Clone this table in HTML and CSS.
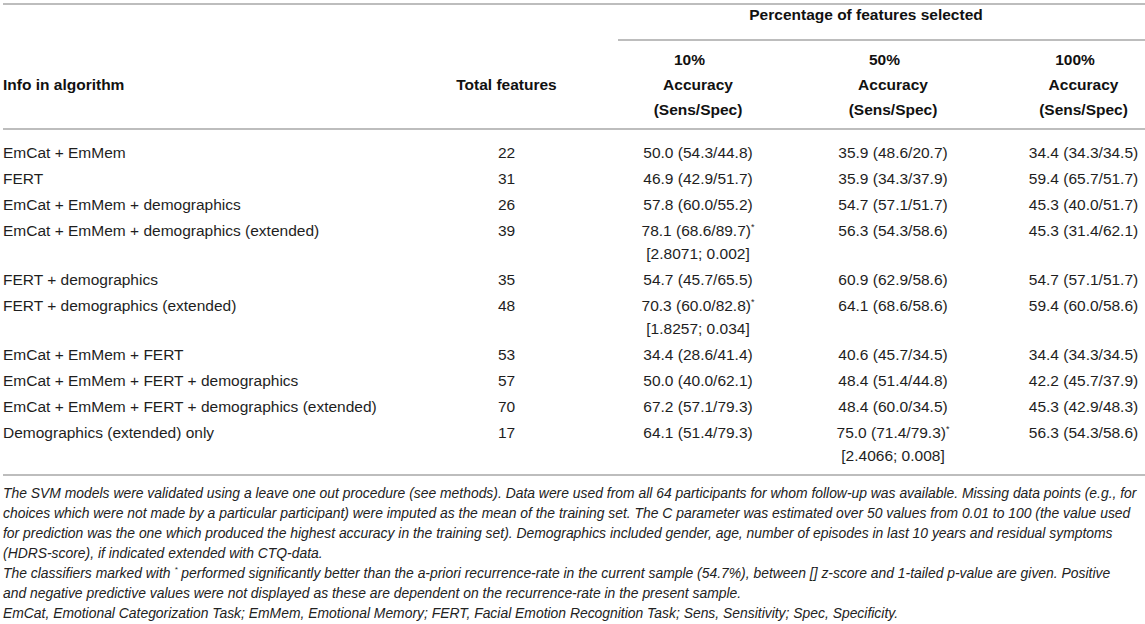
FILE: index.html
```html
<!DOCTYPE html>
<html lang="en">
<head>
  <meta charset="UTF-8">
  <title>SVM classification results</title>
  <link rel="stylesheet" href="styles.css">
</head>
<body>
  <div class="sheet">
    <table class="results">
      <colgroup>
        <col class="c-info">
        <col class="c-total">
        <col class="c-10">
        <col class="c-50">
        <col class="c-100">
      </colgroup>
      <thead>
        <tr class="group-row">
          <th></th>
          <th></th>
          <th colspan="3" class="group">Percentage of features selected</th>
        </tr>
        <tr class="label-row">
          <th class="info">Info in algorithm</th>
          <th class="total">Total features</th>
          <th class="p10"><span class="pct">10%</span><br>Accuracy<br>(Sens/Spec)</th>
          <th class="p50"><span class="pct">50%</span><br>Accuracy<br>(Sens/Spec)</th>
          <th class="p100"><span class="pct">100%</span><br>Accuracy<br>(Sens/Spec)</th>
        </tr>
      </thead>
      <tbody>
        <tr class="first">
          <td class="info">EmCat + EmMem</td>
          <td class="total">22</td>
          <td class="p10">50.0 (54.3/44.8)</td>
          <td class="p50">35.9 (48.6/20.7)</td>
          <td class="p100">34.4 (34.3/34.5)</td>
        </tr>
        <tr>
          <td class="info">FERT</td>
          <td class="total">31</td>
          <td class="p10">46.9 (42.9/51.7)</td>
          <td class="p50">35.9 (34.3/37.9)</td>
          <td class="p100">59.4 (65.7/51.7)</td>
        </tr>
        <tr>
          <td class="info">EmCat + EmMem + demographics</td>
          <td class="total">26</td>
          <td class="p10">57.8 (60.0/55.2)</td>
          <td class="p50">54.7 (57.1/51.7)</td>
          <td class="p100">45.3 (40.0/51.7)</td>
        </tr>
        <tr>
          <td class="info">EmCat + EmMem + demographics (extended)</td>
          <td class="total">39</td>
          <td class="p10">78.1 (68.6/89.7)<sup>*</sup><div class="stat">[2.8071; 0.002]</div></td>
          <td class="p50">56.3 (54.3/58.6)</td>
          <td class="p100">45.3 (31.4/62.1)</td>
        </tr>
        <tr>
          <td class="info">FERT + demographics</td>
          <td class="total">35</td>
          <td class="p10">54.7 (45.7/65.5)</td>
          <td class="p50">60.9 (62.9/58.6)</td>
          <td class="p100">54.7 (57.1/51.7)</td>
        </tr>
        <tr>
          <td class="info">FERT + demographics (extended)</td>
          <td class="total">48</td>
          <td class="p10">70.3 (60.0/82.8)<sup>*</sup><div class="stat">[1.8257; 0.034]</div></td>
          <td class="p50">64.1 (68.6/58.6)</td>
          <td class="p100">59.4 (60.0/58.6)</td>
        </tr>
        <tr>
          <td class="info">EmCat + EmMem + FERT</td>
          <td class="total">53</td>
          <td class="p10">34.4 (28.6/41.4)</td>
          <td class="p50">40.6 (45.7/34.5)</td>
          <td class="p100">34.4 (34.3/34.5)</td>
        </tr>
        <tr>
          <td class="info">EmCat + EmMem + FERT + demographics</td>
          <td class="total">57</td>
          <td class="p10">50.0 (40.0/62.1)</td>
          <td class="p50">48.4 (51.4/44.8)</td>
          <td class="p100">42.2 (45.7/37.9)</td>
        </tr>
        <tr>
          <td class="info">EmCat + EmMem + FERT + demographics (extended)</td>
          <td class="total">70</td>
          <td class="p10">67.2 (57.1/79.3)</td>
          <td class="p50">48.4 (60.0/34.5)</td>
          <td class="p100">45.3 (42.9/48.3)</td>
        </tr>
        <tr class="last">
          <td class="info">Demographics (extended) only</td>
          <td class="total">17</td>
          <td class="p10">64.1 (51.4/79.3)</td>
          <td class="p50">75.0 (71.4/79.3)<sup>*</sup><div class="stat">[2.4066; 0.008]</div></td>
          <td class="p100">56.3 (54.3/58.6)</td>
        </tr>
      </tbody>
    </table>

    <div class="notes">
      <p>The SVM models were validated using a leave one out procedure (see methods). Data were used from all 64 participants for whom follow-up was available. Missing data points (e.g., for<br>choices which were not made by a particular participant) were imputed as the mean of the training set. The C parameter was estimated over 50 values from 0.01 to 100 (the value used<br>for prediction was the one which produced the highest accuracy in the training set). Demographics included gender, age, number of episodes in last 10 years and residual symptoms<br>(HDRS-score), if indicated extended with CTQ-data.</p>
      <p>The classifiers marked with <sup>*</sup> performed significantly better than the a-priori recurrence-rate in the current sample (54.7%), between [] z-score and 1-tailed p-value are given. Positive<br>and negative predictive values were not displayed as these are dependent on the recurrence-rate in the present sample.</p>
      <p>EmCat, Emotional Categorization Task; EmMem, Emotional Memory; FERT, Facial Emotion Recognition Task; Sens, Sensitivity; Spec, Specificity.</p>
    </div>
  </div>
</body>
</html>
```

FILE: styles.css
```css
body{
  margin: 0px;
  background: #ffffff;
  color: #1e1e1e;
  font-family: "Liberation Sans", Arial, Helvetica, sans-serif;
}

.sheet{
  padding: 3px 0px 0px 3px;
}

.results{
  width: 1142px;
  table-layout: fixed;
  border-collapse: collapse;
  border-top: 2px solid #bdbdbd;
  border-bottom: 2px solid #bdbdbd;
  font-size: 15.5px;
}

.c-info{ width: 427px; }
.c-total{ width: 188px; }
.c-10{ width: 160px; }
.c-50{ width: 230px; }
.c-100{ width: 137px; }

th, td{
  padding: 0px;
  font-weight: normal;
}

th{
  font-weight: bold;
  color: #111;
}

.group-row th{
  line-height: 20px;
  padding-bottom: 14px;
}
.group-row .group{
  text-align: center;
  padding-right: 31px;
  border-bottom: 2px solid #bdbdbd;
}

.label-row th{
  line-height: 25px;
  padding-top: 6px;
  padding-bottom: 6px;
  vertical-align: middle;
  border-bottom: 2px solid #bdbdbd;
}
.pct{
  display: inline-block;
  padding-right: 17px;
}

.info{
  text-align: left;
  white-space: nowrap;
}
.total{
  text-align: center;
  padding-right: 35px;
}
.p10, .p50{
  text-align: center;
}
.p100{
  text-align: center;
  padding-left: 14px;
}

td{
  line-height: 22px;
  padding-top: 2px;
  padding-bottom: 2px;
  vertical-align: top;
  white-space: nowrap;
}
td.total{ padding-right: 35px; }
td.p100{ padding-left: 14px; }

tbody tr.first td{
  padding-top: 12px;
}
tbody tr.last td{
  padding-bottom: 7px;
}

td sup{
  font-size: 9px;
  line-height: 0;
  vertical-align: 6px;
}
.stat{
  margin-top: 1px;
}

.notes{
  padding-top: 7px;
  font-size: 13.9px;
  font-style: italic;
  line-height: 20px;
  color: #222;
}
.notes p{
  margin: 0px;
}
.notes sup{
  font-size: 8px;
  line-height: 0;
  vertical-align: 6px;
}
```
